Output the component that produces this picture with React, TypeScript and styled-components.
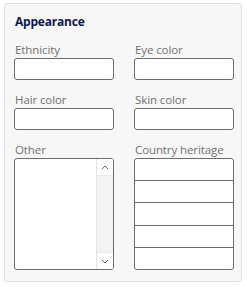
import React from 'react'
import styled, { createGlobalStyle } from 'styled-components'

const Global = createGlobalStyle`
    html, body {
        margin: 0;
        padding: 0;
        background: #ffffff;
    }
    body {
        font-family: "Open Sans", "Noto Sans", sans-serif;
    }
`

const Panel = styled.section`
    box-sizing: border-box;
    width: 238px;
    height: 279px;
    margin: 3px 0 0 4px;
    padding: 9px 0 0 9px;
    background: #f7f7f7;
    border: 1px solid #dedede;
    border-radius: 3px;
`

const Title = styled.h2`
    margin: 0 0 12px 1px;
    font-size: 12px;
    line-height: 17px;
    font-weight: 700;
    letter-spacing: -0.2px;
    color: #0c1a4f;
`

const Grid = styled.div`
    display: grid;
    grid-template-columns: 100px 100px;
    column-gap: 20px;
    row-gap: 12px;
`

const Field = styled.div`
    display: flex;
    flex-direction: column;
`

const Label = styled.label`
    margin-left: 1px;
    font-size: 11.5px;
    line-height: 16px;
    letter-spacing: -0.1px;
    color: #727272;
    white-space: nowrap;
`

const Input = styled.div`
    box-sizing: border-box;
    height: 22px;
    background: #ffffff;
    border: 1px solid #6b6b6b;
    border-radius: 3px;
`

const Box = styled.div`
    box-sizing: border-box;
    height: 112px;
    background: #ffffff;
    border: 1px solid #6b6b6b;
    border-radius: 3px;
    overflow: hidden;
    display: flex;
`

const BoxBody = styled.div`
    flex: 1;
`

const ScrollBar = styled.div`
    width: 16px;
    border-left: 1px solid #e2e2e2;
    display: flex;
    flex-direction: column;
    background: #f3f3f3;
`

const ArrowButton = styled.div<{ $bottom?: boolean }>`
    height: 16px;
    display: flex;
    align-items: center;
    justify-content: center;
    background: #ffffff;
    ${p => (p.$bottom ? 'border-top: 1px solid #e8e8e8; margin-top: auto;' : 'border-bottom: 1px solid #e8e8e8;')}
`

const Rows = styled.div`
    flex: 1;
    display: flex;
    flex-direction: column;
`

const Row = styled.div`
    flex: 1;
    border-bottom: 1px solid #6b6b6b;

    &:last-child {
        border-bottom: none;
    }
`

const Chevron = ({ down }: { down?: boolean }) => (
    <svg width="8" height="5" viewBox="0 0 8 5">
        <path
            d={down ? 'M1 1 L4 4 L7 1' : 'M1 4 L4 1 L7 4'}
            fill="none"
            stroke="#606060"
            strokeWidth="1"
        />
    </svg>
)

const App: React.FC = () => (
    <>
        <Global />
        <Panel>
            <Title>Appearance</Title>
            <Grid>
                <Field>
                    <Label>Ethnicity</Label>
                    <Input />
                </Field>
                <Field>
                    <Label>Eye color</Label>
                    <Input />
                </Field>
                <Field>
                    <Label>Hair color</Label>
                    <Input />
                </Field>
                <Field>
                    <Label>Skin color</Label>
                    <Input />
                </Field>
                <Field>
                    <Label>Other</Label>
                    <Box>
                        <BoxBody />
                        <ScrollBar>
                            <ArrowButton><Chevron /></ArrowButton>
                            <ArrowButton $bottom><Chevron down /></ArrowButton>
                        </ScrollBar>
                    </Box>
                </Field>
                <Field>
                    <Label>Country heritage</Label>
                    <Box>
                        <Rows>
                            {[0, 1, 2, 3, 4].map(i => <Row key={i} />)}
                        </Rows>
                    </Box>
                </Field>
            </Grid>
        </Panel>
    </>
)

export default App
